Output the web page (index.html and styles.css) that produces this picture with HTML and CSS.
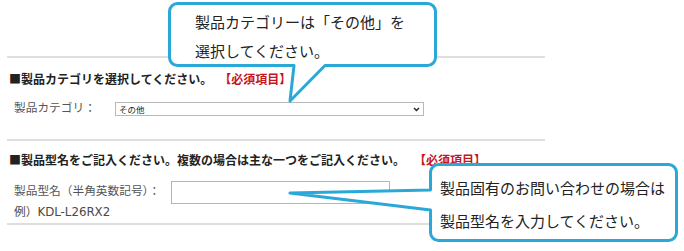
FILE: index.html
```html
<!DOCTYPE html>
<html lang="ja">
<head>
    <meta charset="UTF-8">
    <title>製品情報の入力</title>
    <link rel="stylesheet" href="styles.css">
</head>
<body>
    <div class="form-area">
        <div class="rule rule-first"></div>
        <div class="section">
            <h3 class="section-title">■製品カテゴリを選択してください。<span class="required required-cat">【必須項目】</span></h3>
            <div class="field field-cat">
                <label class="field-label label-cat" for="category">製品カテゴリ：</label>
                <span class="select-wrap">
                    <select id="category" class="cat-select">
                        <option>その他</option>
                    </select>
                    <svg class="select-arrow" width="7" height="5" viewBox="0 0 7 5"><path d="M1 1 L3.5 3.5 L6 1" fill="none" stroke="#222" stroke-width="1.4"/></svg>
                </span>
            </div>
        </div>
        <div class="rule rule-mid"></div>
        <div class="section">
            <h3 class="section-title">■製品型名をご記入ください。複数の場合は主な一つをご記入ください。<span class="required required-model">【必須項目】</span></h3>
            <div class="field field-model">
                <label class="field-label label-model" for="model">製品型名（半角英数記号）：</label>
                <input type="text" id="model" class="model-input">
            </div>
            <p class="example">例）<span class="example-code">KDL-L26RX2</span></p>
        </div>
        <div class="rule rule-last"></div>
    </div>

    <!-- 吹き出し -->
    <div class="callout callout-top">
        <svg class="callout-shape" width="276" height="106" viewBox="0 0 276 106">
            <path d="M11.5 3.5 H261.5 A8 8 0 0 1 269.5 11.5 V57.5 A8 8 0 0 1 261.5 65.5 H159 L124 101 L128 65.5 H11.5 A8 8 0 0 1 3.5 57.5 V11.5 A8 8 0 0 1 11.5 3.5 Z" fill="#fff" stroke="#2aa8d8" stroke-width="3" stroke-linejoin="round"/>
        </svg>
        <p class="callout-text">製品カテゴリーは「その他」を<br>選択してください。</p>
    </div>
    <div class="callout callout-side">
        <svg class="callout-shape" width="394" height="86" viewBox="0 0 394 86">
            <path d="M151.5 4.5 H381.5 A8 8 0 0 1 389.5 12.5 V72.5 A8 8 0 0 1 381.5 80.5 H151.5 A8 8 0 0 1 143.5 72.5 V50 L3 33 L143.5 30 V12.5 A8 8 0 0 1 151.5 4.5 Z" fill="#fff" stroke="#2aa8d8" stroke-width="3" stroke-linejoin="round"/>
        </svg>
        <p class="callout-text">製品固有のお問い合わせの場合は<br>製品型名を入力してください。</p>
    </div>
</body>
</html>
```

FILE: styles.css
```css
body {
    margin: 0;
    padding: 0;
    background-color: #fff;
    color: #222;
    font-family: "Noto Sans CJK JP", "Noto Sans", sans-serif;
}
.form-area {
    width: 538px;
    margin-left: 7px;
}
.rule {
    border-top: 2px solid #dedede;
    height: 0;
}
.rule-first {
    margin-top: 56px;
}
.rule-mid {
    margin-top: 23px;
}
.rule-last {
    margin-top: 4px;
}
.section-title {
    margin: 0;
    padding-left: 2px;
    font-size: 12px;
    line-height: 16px;
    font-weight: bold;
    color: #222;
    white-space: nowrap;
}
.rule + .section .section-title {
    margin-top: 13px;
}
.rule-mid + .section .section-title {
    margin-top: 11px;
}
.required {
    color: #c4161c;
    font-weight: bold;
}
.required-cat {
    margin-left: 13px;
}
.required-model {
    margin-left: 15px;
}
.field {
    display: flex;
    align-items: flex-start;
    padding-left: 7px;
}
.field-cat {
    margin-top: 12px;
}
.field-model {
    margin-top: 13px;
}
.field-label {
    font-size: 11.7px;
    line-height: 16px;
    color: #555;
    white-space: nowrap;
}
.label-cat {
    width: 101px;
}
.label-model {
    width: 157px;
    margin-top: 1px;
}
.select-wrap {
    position: relative;
    display: block;
    margin-top: 3px;
}
.cat-select {
    display: block;
    width: 309px;
    height: 14px;
    margin: 0;
    padding: 0 0 0 3px;
    border: 1px solid #b9b9b9;
    border-radius: 0;
    background-color: #fff;
    color: #222;
    font-family: inherit;
    font-size: 8.5px;
    line-height: 12px;
    -webkit-appearance: none;
    appearance: none;
}
.select-arrow {
    position: absolute;
    right: 4px;
    top: 5px;
}
.model-input {
    display: block;
    width: 219px;
    height: 23px;
    margin: 0;
    padding: 0;
    box-sizing: border-box;
    border: 1px solid #b5b5b5;
    background-color: #fff;
}
.example {
    margin: 0;
    padding-left: 7px;
    font-size: 11.7px;
    line-height: 14px;
    color: #4a4a4a;
}
.example-code {
    font-family: "DejaVu Sans", "Noto Sans CJK JP", sans-serif;
    font-size: 11.8px;
}
.callout {
    position: absolute;
}
.callout-shape {
    position: absolute;
    left: 0;
    top: 0;
}
.callout-text {
    position: relative;
    margin: 0;
    font-size: 15px;
    color: #222;
    white-space: nowrap;
}
.callout-top {
    left: 166px;
    top: 0;
    width: 276px;
    height: 106px;
}
.callout-top .callout-text {
    padding: 7px 0 0 29px;
    line-height: 29px;
}
.callout-side {
    left: 287px;
    top: 160px;
    width: 394px;
    height: 86px;
}
.callout-side .callout-text {
    padding: 11px 0 0 153px;
    line-height: 33px;
}
```
